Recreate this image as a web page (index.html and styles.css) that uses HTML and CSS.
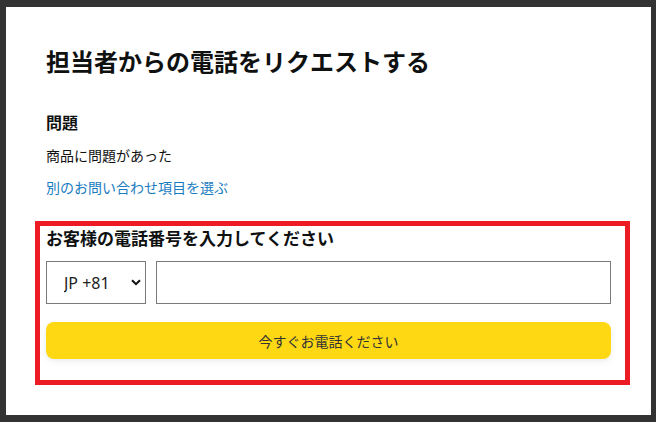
FILE: index.html
```html
<!DOCTYPE html>
<html lang="ja">

<head>
    <meta charset="utf-8" />
    <title>電話をリクエスト</title>
    <link rel="stylesheet" href="styles.css">
</head>

<body>
    <div class="modal">
        <h1 class="title">担当者からの電話をリクエストする</h1>

        <h2 class="label">問題</h2>
        <p class="issue">商品に問題があった</p>
        <a class="change-link" href="#">別のお問い合わせ項目を選ぶ</a>

        <section class="phone-box">
            <h2 class="label phone-label">お客様の電話番号を入力してください</h2>
            <div class="phone-row">
                <div class="select-wrap">
                    <select class="country">
                        <option>JP +81</option>
                    </select>
                    <svg class="chevron" width="10" height="7" viewBox="0 0 10 7">
                        <path d="M1 1.2 L5 5.2 L9 1.2" fill="none" stroke="#111" stroke-width="2" />
                    </svg>
                </div>
                <input class="phone-input" type="text" />
            </div>
            <button class="call-btn">今すぐお電話ください</button>
        </section>
    </div>
</body>

</html>
```

FILE: styles.css
```css
body {
    margin: 0;
    padding: 7px 5px 7px 6px;
    background-color: #323332;
    font-family: "Noto Sans CJK JP", "Noto Sans", sans-serif;
    color: #0f1111;
}

.modal {
    width: 645px;
    height: 408px;
    box-sizing: border-box;
    background-color: white;
    padding: 38px 40px 0 40px;
}

.title {
    margin: 0;
    font-size: 24px;
    line-height: 32px;
    font-weight: 700;
}

.label {
    margin: 33px 0 0 0;
    font-size: 16px;
    line-height: 24px;
    font-weight: 700;
}

.issue {
    margin: 11px 0 0 0;
    font-size: 14px;
    line-height: 20px;
}

.change-link {
    display: block;
    margin-top: 12px;
    font-size: 14px;
    line-height: 20px;
    color: #1a7cc0;
    text-decoration: none;
}

.phone-box {
    margin: 24px -19px 0 -11px;
    border: 5px solid #ed1c24;
    padding: 0 14px 21px 6px;
}

.phone-label {
    margin: 0;
    font-size: 17px;
}

.phone-row {
    display: flex;
    gap: 10px;
    margin-top: 11px;
}

.select-wrap {
    position: relative;
    width: 100px;
    height: 43px;
}

.country {
    appearance: none;
    width: 100%;
    height: 100%;
    border: 1px solid #7a7a7a;
    border-radius: 0;
    background-color: white;
    padding: 0 0 0 17px;
    font-family: "Noto Sans", sans-serif;
    font-size: 16px;
    color: #222;
}

.chevron {
    position: absolute;
    right: 5px;
    top: 18px;
    pointer-events: none;
}

.phone-input {
    flex: 1;
    height: 43px;
    box-sizing: border-box;
    border: 1px solid #7a7a7a;
    margin: 0;
}

.call-btn {
    display: block;
    width: 100%;
    height: 37px;
    margin-top: 18px;
    border: none;
    border-radius: 8px;
    background-color: #ffd814;
    box-shadow: 0 2px 5px 0 rgba(213, 217, 217, 0.5);
    font-family: "Noto Sans CJK JP", sans-serif;
    font-size: 14px;
    color: #333;
}
```
